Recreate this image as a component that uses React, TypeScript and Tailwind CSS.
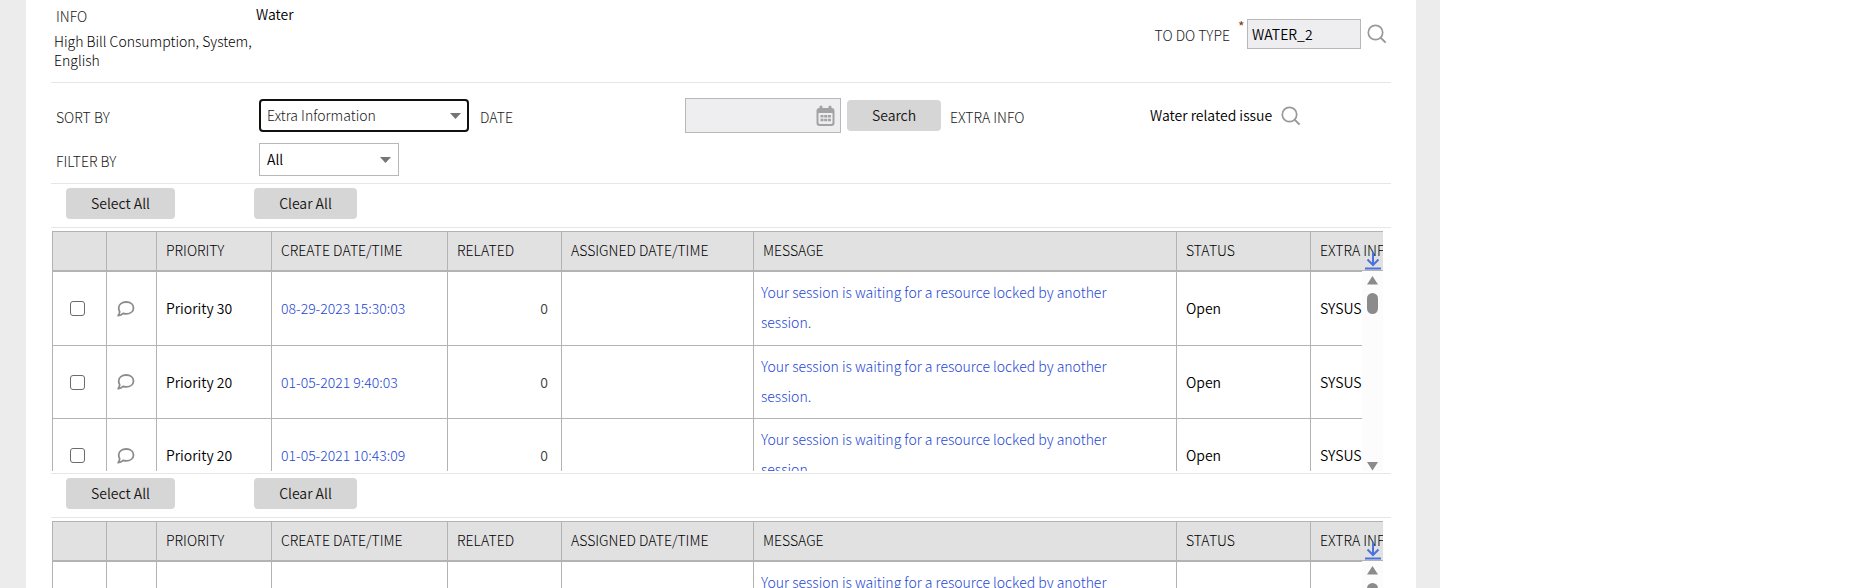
type Row = { priority: string; created: string };

const rows: Row[] = [
  { priority: 'Priority 30', created: '08-29-2023 15:30:03' },
  { priority: 'Priority 20', created: '01-05-2021 9:40:03' },
  { priority: 'Priority 20', created: '01-05-2021 10:43:09' },
];

const SearchIcon = () => (
  <svg width="20" height="20" viewBox="0 0 20 20" fill="none" stroke="#999999" strokeWidth="1.7">
    <circle cx="8.5" cy="8.5" r="7.2" />
    <path d="M13.6 13.6 18.6 18.6" strokeWidth="2" />
  </svg>
);

const CalendarIcon = () => (
  <svg width="19" height="22" viewBox="0 0 18 22">
    <path fill="#a3a3a3" fillRule="evenodd" d="M3 2a1 1 0 0 1 3 0v1h6V2a1 1 0 0 1 3 0v1a3 3 0 0 1 3 3v12a3 3 0 0 1-3 3H3a3 3 0 0 1-3-3V6a3 3 0 0 1 3-3zM2 8v9.500a1.500 1.500 0 0 0 1.500 1.500h11a1.500 1.500 0 0 0 1.500-1.500V8z" />
    <path fill="#a3a3a3" d="M4 10h3v2.500H4zM7.700 10h3v2.500h-3zM11.400 10h3v2.500h-3zM4 13.700h3v2.500H4zM7.700 13.700h3v2.500h-3zM11.400 13.700h3v2.500h-3z" />
  </svg>
);

const CommentIcon = () => (
  <svg width="18" height="16" viewBox="0 0 18 16" fill="none" stroke="#8c8c8c" strokeWidth="1.800" strokeLinejoin="round">
    <path d="M9.200 1C13.400 1 16.500 3.400 16.500 6.900S13.400 12.800 9.200 12.800c-1.200 0-2.200-.2-3.100-.5C5 13.500 3.200 14.500 1.200 14.600c.9-1.100 1.400-2.500 1.500-3.900C2 9.700 1.700 8.200 1.700 6.900 1.700 3.400 5 1 9.200 1z" />
  </svg>
);

const DownloadIcon = () => (
  <svg width="16" height="18" viewBox="0 0 16 18" fill="none" stroke="#4a72dc" strokeWidth="2">
    <path d="M8 0V13M2.500 7.500 8 13 13.500 7.500M0 16.500H16" />
  </svg>
);

const Caret = () => (
  <svg className="pointer-events-none absolute top-1/2 right-2 -translate-y-1/2" width="11" height="6" viewBox="0 0 11 6">
    <path fill="#757575" d="M0 0h11L5.500 6z" />
  </svg>
);

const button = 'h-[31px] rounded bg-[#d6d6d6] text-center font-[350] text-[#161513]';
const label = 'text-[#202020]';
const link = 'text-[#2446d4]';

function ListSection({ id }: { id: string }) {
  const th = 'h-[41px] border-t border-r border-b-2 border-[#b3b3b3] bg-[#e1e1e1] px-[9px] pb-px text-left font-light whitespace-nowrap text-black first:border-l';
  const td = 'border-r border-b border-[#b3b3b3] px-[9px] font-[350] first:border-l';
  return (
    <section className="h-[290px]">
      <div className="flex h-[44px] items-start border-b border-[#e6e6e6] pt-1 pl-[15px]">
        <button className={`${button} w-[109px]`}>Select All</button>
        <button className={`${button} ml-[79px] w-[103px]`}>Clear All</button>
      </div>
      <div className="relative mt-[3px] mr-2 ml-px h-[240px] overflow-hidden">
        <table className="w-[1500px] table-fixed border-separate border-spacing-0">
          <colgroup>
            <col className="w-[55px]" />
            <col className="w-[50px]" />
            <col className="w-[115px]" />
            <col className="w-[176px]" />
            <col className="w-[114px]" />
            <col className="w-[192px]" />
            <col className="w-[423px]" />
            <col className="w-[134px]" />
            <col />
          </colgroup>
          <thead>
            <tr>
              <th className={th} />
              <th className={th} />
              <th className={th}>PRIORITY</th>
              <th className={th}>CREATE DATE/TIME</th>
              <th className={th}>RELATED</th>
              <th className={th}>ASSIGNED DATE/TIME</th>
              <th className={th}>MESSAGE</th>
              <th className={th}>STATUS</th>
              <th className={th}>EXTRA INFO</th>
            </tr>
          </thead>
          <tbody>
            {rows.map((row, i) => (
              <tr key={i} className="h-[74px] even:h-[73px]">
                <td className={td}>
                  <input
                    type="checkbox"
                    aria-label={`Select row ${i + 1}`}
                    id={`${id}-${i}`}
                    className="ml-2 block size-[15px] appearance-none rounded-[3px] border border-[#6b6b6b] bg-white checked:bg-[#2446d4]"
                  />
                </td>
                <td className={td}>
                  <button aria-label="Comment" className="ml-px block"><CommentIcon /></button>
                </td>
                <td className={td}>{row.priority}</td>
                <td className={td}><a href="#created" className={`${link} font-light`}>{row.created}</a></td>
                <td className={`${td} text-right text-[#404040]`}><span className="pr-1">0</span></td>
                <td className={td} />
                <td className="border-r border-b border-[#b3b3b3] pr-12 pb-[3px] pl-[7px] leading-[30px]">
                  <a href="#message" className={link}>
                    Your session is waiting for a resource locked by another session.
                  </a>
                </td>
                <td className={td}>Open</td>
                <td className={td}>SYSUSER</td>
              </tr>
            ))}
          </tbody>
        </table>
        <button aria-label="Download" className="absolute top-[21px] right-[2px]"><DownloadIcon /></button>
        <div className="absolute top-10 right-0 bottom-0 flex w-[21px] flex-col items-center bg-[#fcfcfc] pt-[5px]">
          <svg width="11" height="9" viewBox="0 0 11 9"><path fill="#8b8b8b" d="M5.500 0 11 8.500H0z" /></svg>
          <div className="mt-2 h-[21px] w-[11px] rounded-full bg-[#8b8b8b]" />
          <svg className="mt-auto" width="11" height="9" viewBox="0 0 11 9"><path fill="#8b8b8b" d="M0 0h11L5.500 8.500z" /></svg>
        </div>
      </div>
    </section>
  );
}

export default function App() {
  return (
    <div className="h-screen overflow-hidden bg-white font-['Noto_Sans_CJK_SC',sans-serif] text-[14px] leading-[19px] font-light text-black">
      <div className="max-w-[1440px] bg-[#ececec] pr-6 pl-[26px]">
        <main className="bg-white px-[25px]">
          <header className="flex h-[83px] items-start border-b border-[#e6e6e6]">
            <div className="w-[205px] pl-[3px]">
              <p className={`${label} pt-[7px] pl-[2px]`}>INFO</p>
              <p className="mt-[6px]">High Bill Consumption, System, English</p>
            </div>
            <p className="pt-[5px] font-[350]">Water</p>
            <div className="ml-auto flex items-start pt-[19px] pr-1">
              <label htmlFor="todo" className={`${label} pt-[7px]`}>TO DO TYPE</label>
              <span className="w-[17px] pl-2 text-[14px] leading-[14px] font-normal text-[#8a3a10]">*</span>
              <input id="todo" defaultValue="WATER_2" className="h-[30px] w-[114px] border border-[#b8b8b8] bg-[#eeeef0] px-1 font-[350]" />
              <button aria-label="Search to do type" className="mt-[5px] ml-[6px]"><SearchIcon /></button>
            </div>
          </header>
          <div className="border-b border-[#e6e6e6] pb-[7px]">
            <div className="grid grid-cols-[208px_221px_205px_162px_103px_200px_1fr] items-center pt-[15px]">
              <label htmlFor="sort" className={`${label} pt-1 pl-[5px]`}>SORT BY</label>
              <div className="relative w-[210px]">
                <select id="sort" className="block h-[33px] w-full appearance-none rounded border-2 border-[#101010] bg-white px-[6px] text-[#202020]">
                  <option>Extra Information</option>
                </select>
                <Caret />
              </div>
              <label htmlFor="date" className={`${label} pt-1`}>DATE</label>
              <div className="relative w-[156px]">
                <input id="date" className="block h-[35px] w-full border border-[#b8b8b8] bg-[#eeeef0] pr-8 pl-1" />
                <button aria-label="Open calendar" className="absolute top-[7px] right-[6px]"><CalendarIcon /></button>
              </div>
              <button className={`${button} w-[94px]`}>Search</button>
              <span className={`${label} pt-1`}>EXTRA INFO</span>
              <div className="flex items-center">
                <span className="w-[131px] font-[350]">Water related issue</span>
                <button aria-label="Search extra info"><SearchIcon /></button>
              </div>
            </div>
            <div className="mt-[10px] flex items-center">
              <label htmlFor="filter" className={`${label} w-[208px] pt-1 pl-[5px]`}>FILTER BY</label>
              <div className="relative w-[140px]">
                <select id="filter" className="block h-[33px] w-full appearance-none border border-[#b8b8b8] bg-white px-[7px] font-[350]">
                  <option>All</option>
                </select>
                <Caret />
              </div>
            </div>
          </div>
          <ListSection id="first" />
          <div className="-mt-px border-t border-[#e6e6e6]">
            <ListSection id="second" />
          </div>
        </main>
      </div>
    </div>
  );
}
